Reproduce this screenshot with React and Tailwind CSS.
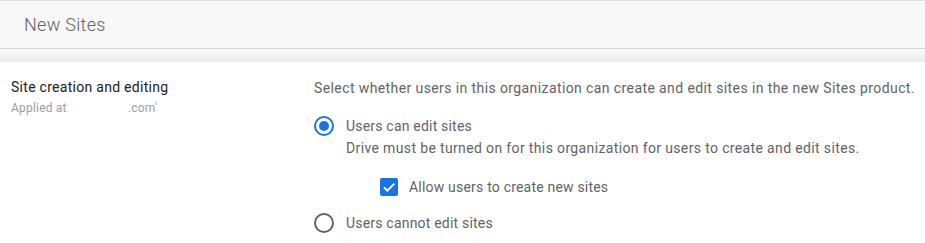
import React from 'react';

function Radio({ checked }) {
  return checked ? (
    <span className="w-5 h-5 rounded-full border-2 border-[#1a73e8] flex items-center justify-center flex-shrink-0">
      <span className="w-2.5 h-2.5 rounded-full bg-[#1a73e8]" />
    </span>
  ) : (
    <span className="w-5 h-5 rounded-full border-2 border-[#5f6368] flex-shrink-0" />
  );
}

function Checkbox() {
  return (
    <span className="w-[18px] h-[18px] rounded-[2px] bg-[#1a73e8] flex items-center justify-center flex-shrink-0">
      <svg viewBox="0 0 24 24" className="w-[16px] h-[16px]" fill="none" stroke="white" strokeWidth="3">
        <path d="M4.5 12.5l5 5L20 7" />
      </svg>
    </span>
  );
}

export default function App() {
  return (
    <div className="w-[925px] h-[243px] bg-white overflow-hidden font-['Roboto',sans-serif]">
      {/* Header */}
      <div className="h-[49px] bg-[#f8f8f8] border-t border-[#e3e3e3] border-b border-b-[#d6d6d6] flex items-center px-6">
        <h1 className="text-[18px] text-[#5f6368] font-light tracking-[0.3px]">New Sites</h1>
      </div>
      <div className="h-[13px] bg-gradient-to-b from-[#fbfbfb] to-[#ebebeb]" />

      {/* Setting row */}
      <div className="flex">
        <div className="w-[314px] pl-[11px] pt-[15px]">
          <p className="text-[14px] text-[#212121] leading-5 tracking-[0.28px]">Site creation and editing</p>
          <p className="text-[12px] text-[#9e9e9e] leading-5 mt-[1px] tracking-[0.2px]">
            Applied at <span className="inline-block w-[58px]" />.com'
          </p>
        </div>
        <div className="flex-1 pt-[16px] text-[14px] text-[#5f6368]">
          <p className="leading-5 tracking-[0.4px]">
            Select whether users in this organization can create and edit sites in the new Sites product.
          </p>
          <div className="mt-[18px] flex items-start gap-[12px]">
            <Radio checked />
            <div>
              <p className="leading-5 tracking-[0.2px]">Users can edit sites</p>
              <p className="leading-5 mt-[2px] tracking-[0.36px]">Drive must be turned on for this organization for users to create and edit sites.</p>
              <div className="mt-[19px] ml-[34px] flex items-center gap-[11px]">
                <Checkbox />
                <span className="leading-5 tracking-[0.2px]">Allow users to create new sites</span>
              </div>
            </div>
          </div>
          <div className="mt-[16px] flex items-center gap-[12px]">
            <Radio />
            <span className="leading-5 tracking-[0.2px]">Users cannot edit sites</span>
          </div>
        </div>
      </div>
    </div>
  );
}
